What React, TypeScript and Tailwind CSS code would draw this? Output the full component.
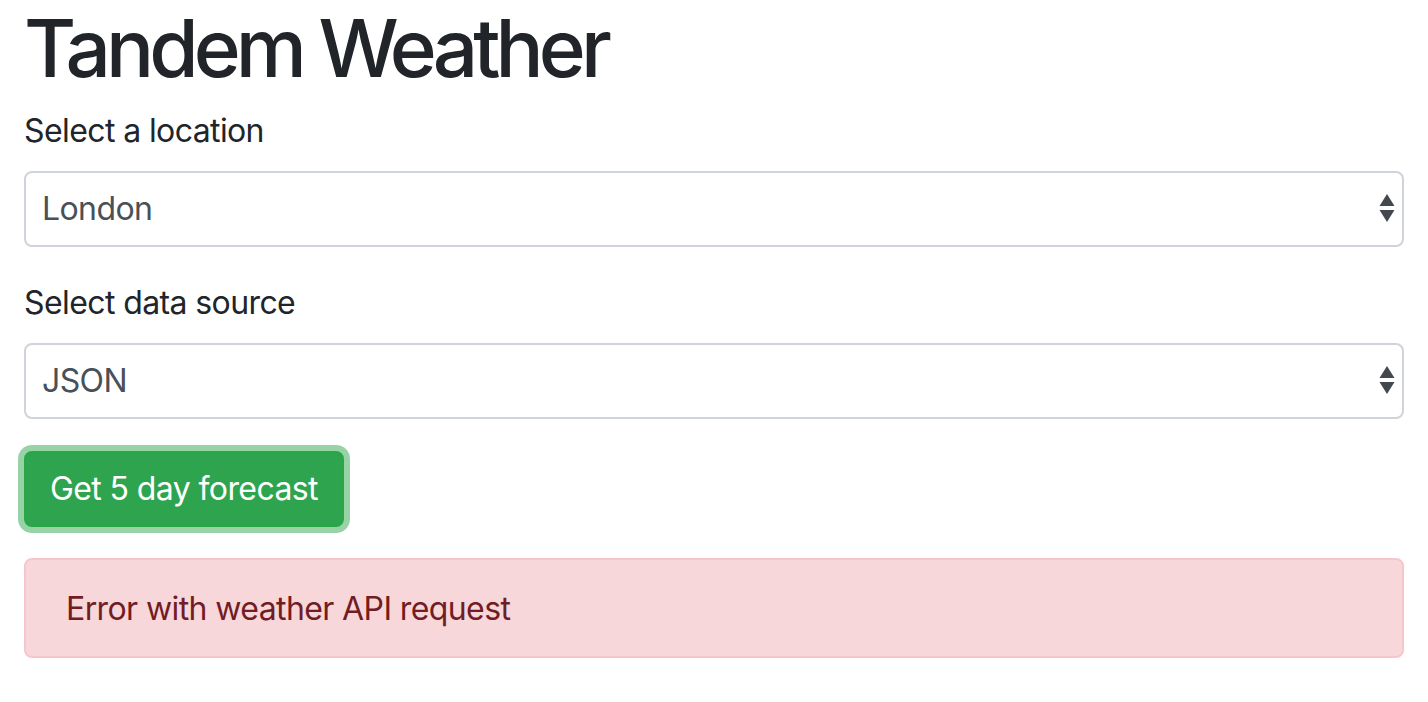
import { useState } from "react"

function SelectArrows() {
  return (
    <svg width="16" height="32" viewBox="0 0 16 32" className="pointer-events-none absolute right-[9px] top-1/2 -translate-y-1/2">
      <path d="M8 1 L15.5 13 L0.5 13 Z" fill="#43484e" />
      <path d="M0.5 17 L15.5 17 L8 29 Z" fill="#43484e" />
    </svg>
  )
}

function Field({ label, value, options }: { label: string; value: string; options: string[] }) {
  const [v, setV] = useState(value)
  return (
    <div className="mb-8">
      <label className="block mb-4 text-[32px] leading-[48px] tracking-[-0.6px] text-[#212529]">{label}</label>
      <div className="relative">
        <select
          value={v}
          onChange={(e) => setV(e.target.value)}
          className="block w-full h-[76px] appearance-none rounded-[8px] border-2 border-[#ced4da] bg-white pl-[16px] pr-12 text-[32px] leading-[48px] tracking-[-0.6px] text-[#495057] outline-none"
        >
          {options.map((o) => (
            <option key={o}>{o}</option>
          ))}
        </select>
        <SelectArrows />
      </div>
    </div>
  )
}

export default function App() {
  return (
    <div className="min-h-screen bg-white px-6 font-['Inter','Helvetica_Neue',Arial,sans-serif]">
      <h1 className="mb-[11px] text-[80px] leading-[96px] font-medium text-[#212529] tracking-[-4.9px]">Tandem Weather</h1>

      <Field label="Select a location" value="London" options={["London", "Paris", "New York"]} />
      <Field label="Select data source" value="JSON" options={["JSON", "XML"]} />

      <button className="rounded-[8px] border-2 border-[#28a745] bg-[#2ea44f] px-6 py-3 text-[32px] leading-[48px] tracking-[-0.6px] text-white shadow-[0_0_0_6px_#97d3a6]">
        Get 5 day forecast
      </button>

      {/* Error state */}
      <div className="mt-[31px] rounded-[8px] border-2 border-[#f5c6cb] bg-[#f8d7da] px-10 pt-[25px] pb-[23px] text-[32px] leading-[48px] tracking-[-0.6px] text-[#721c24]">
        Error with weather API request
      </div>
    </div>
  )
}
